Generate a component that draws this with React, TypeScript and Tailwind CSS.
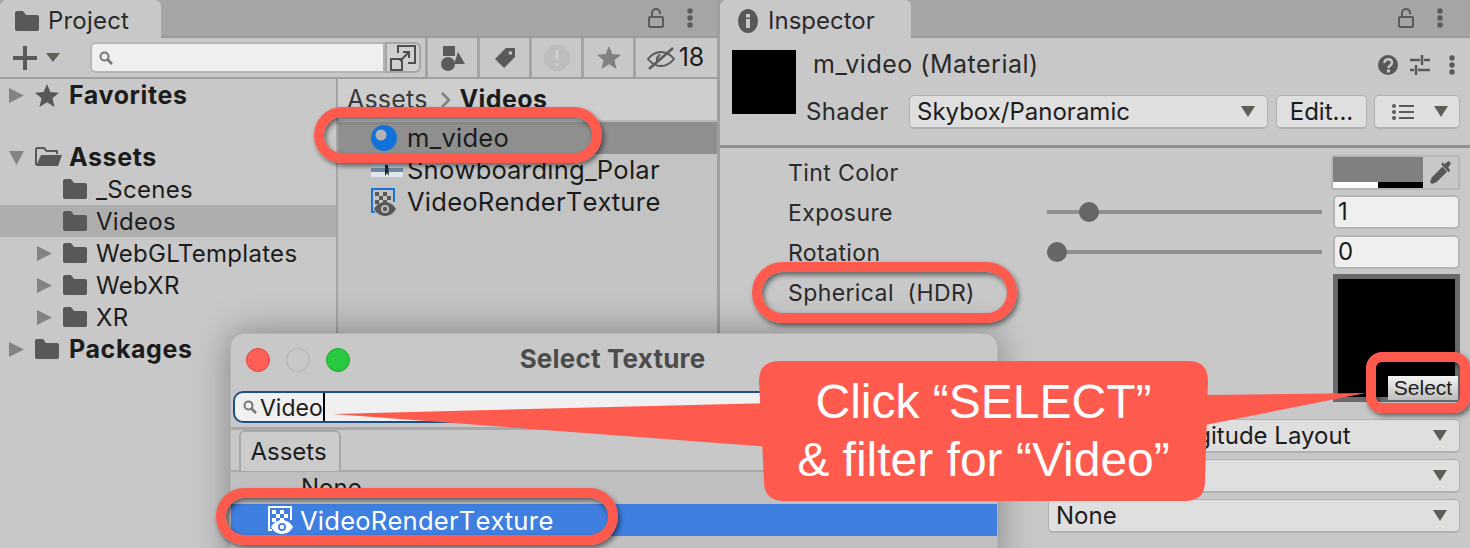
import React from "react";

const Folder = ({ className = "" }: { className?: string }) => (
  <svg viewBox="0 0 24 20" className={className} fill="#585858">
    <path d="M0 2a2 2 0 0 1 2-2h6l3 4h11a2 2 0 0 1 2 2v12a2 2 0 0 1-2 2H2a2 2 0 0 1-2-2z" />
  </svg>
);

const FolderOpen = ({ className = "" }: { className?: string }) => (
  <svg viewBox="0 0 27 20" className={className}>
    <path d="M1 18V2.5A1.5 1.5 0 0 1 2.5 1H9l2.5 3H22v3" fill="none" stroke="#585858" strokeWidth="2" />
    <path d="M1 19 6 8h21l-4 11z" fill="#585858" />
  </svg>
);

const Tri = ({ open = false, className = "" }: { open?: boolean; className?: string }) => (
  <svg viewBox="0 0 16 16" className={className} fill="#838383">
    {open ? <path d="M0 1h16L8 16z" /> : <path d="M0 0l16 8-16 8z" />}
  </svg>
);

const Star = ({ className = "", fill = "#585858" }: { className?: string; fill?: string }) => (
  <svg viewBox="0 0 24 23" className={className} fill={fill}>
    <path d="M12 0l3.400 8 8.600.7-6.500 5.600 2 8.700L12 18.300 4.500 23l2-8.700L0 8.700 8.600 8z" />
  </svg>
);

const Search = ({ className = "" }: { className?: string }) => (
  <svg viewBox="0 0 14 14" className={className} fill="none" stroke="#777" strokeWidth="2">
    <circle cx="5.500" cy="5.500" r="4" />
    <path d="M8.500 8.500 13 13" strokeWidth="2.600" />
  </svg>
);

const Lock = () => (
  <svg viewBox="0 0 16 20" className="w-[16px] h-[20px]" fill="none" stroke="#5a5a5a" strokeWidth="2">
    <rect x="1" y="9" width="14" height="10" rx="1" />
    <path d="M4 9V5a4 4 0 0 1 8 0v1" />
  </svg>
);

const Dots = ({ fill = "#5a5a5a" }: { fill?: string }) => (
  <svg viewBox="0 0 6 20" className="w-[6px] h-[20px]" fill={fill}>
    <circle cx="3" cy="3" r="2.700" />
    <circle cx="3" cy="10" r="2.700" />
    <circle cx="3" cy="17" r="2.700" />
  </svg>
);

const RenderTex = ({ light = false, className = "" }: { light?: boolean; className?: string }) => {
  const c = light ? "#ffffff" : "#585858";
  const b = light ? "#ffffff" : "#1a73d9";
  return (
    <svg viewBox="0 0 26 28" className={className}>
      <path d="M4 24H1V1h22v13" fill="none" stroke={b} strokeWidth="2" />
      <path d="M4 4h4v4H4zM12 4h4v4h-4zM8 8h4v4H8zM16 8h4v4h-4zM4 12h4v4H4zM12 12h4v3h-4z" fill={c} />
      <path d="M3 21c3-5 7-7 11-7s8 2 11 7c-3 5-7 7-11 7S6 26 3 21z" fill={c} />
      <circle cx="14" cy="21" r="4" fill={light ? "#3f7fe0" : "#c0c0c0"} />
      <circle cx="14" cy="21" r="2.200" fill={c} />
    </svg>
  );
};

const Caret = () => (
  <svg viewBox="0 0 14 11" className="w-[14px] h-[11px]" fill="#5f5f57">
    <path d="M0 0h14L7 11z" />
  </svg>
);

const TreeRow = ({
  label,
  indent,
  bold = false,
  arrow = false,
  open = false,
  selected = false,
  icon,
}: {
  label: string;
  indent: number;
  bold?: boolean;
  arrow?: boolean;
  open?: boolean;
  selected?: boolean;
  icon?: React.ReactNode;
}) => {
  const wrap = indent === 0 ? "pl-[9px]" : "pl-[37px]";
  return (
    <div className={`flex items-center h-8 ${wrap} ${selected ? "bg-[#aeaeae]" : ""}`}>
      <div className="w-[26px] flex items-center shrink-0">
        {arrow && <Tri open={open} className="w-[15px] h-[15px]" />}
      </div>
      <div className="w-[34px] flex items-center shrink-0">
        {icon ?? <Folder className="w-[24px] h-[20px]" />}
      </div>
      <span
        className={`leading-8 text-[#1c1c1c] ${
          bold ? "text-[25px] font-bold tracking-[0.6px]" : "text-[24px] tracking-[0.3px] -ml-[1px] pt-[1px]"
        }`}
      >
        {label}
      </span>
    </div>
  );
};

const FileRow = ({ icon, label, selected = false }: { icon: React.ReactNode; label: string; selected?: boolean }) => (
  <div className={`flex items-center h-8 pl-[33px] ${selected ? "bg-[#8f8f8f]" : ""}`}>
    <div className="w-[36px] flex items-center justify-start shrink-0">{icon}</div>
    <span className="text-[25.6px] tracking-[0.2px] leading-8 text-[#1c1c1c] [font-kerning:none]">{label}</span>
  </div>
);

const ToolBtn = ({ children }: { children: React.ReactNode }) => (
  <div className="w-[52px] h-full flex items-center justify-center border-l-[3px] border-[#a4a4a4] shrink-0">
    {children}
  </div>
);

const Dropdown = ({ text, className = "" }: { text?: string; className?: string }) => (
  <div
    className={`h-[34px] bg-[#dfdfdf] rounded-[5px] border-b-2 border-x border-t border-[#b0b0b0] flex items-center justify-between pl-[7px] pr-[12px] ${className}`}
  >
    <span className="text-[24px] text-[#1c1c1c] whitespace-nowrap">{text}</span>
    <Caret />
  </div>
);

const Slider = ({ pos }: { pos: number }) => (
  <div className="relative w-[275px] h-1 bg-[#8f8f8f] mr-[11px]">
    <div className="absolute top-[-8px] w-5 h-5 rounded-full bg-[#666666]" style={{ left: pos }} />
  </div>
);

const NumField = ({ value }: { value: string }) => (
  <div className="w-[127px] h-[34px] bg-[#efefef] rounded-[5px] border-2 border-[#b5b5b5] flex items-center pl-[3px] text-[24px] text-[#1c1c1c]">
    {value}
  </div>
);

const Label = ({ children }: { children: React.ReactNode }) => (
  <span className="block pt-[2px] text-[23px] tracking-[0.4px] text-[#2a2a2a]">{children}</span>
);

const Ring = ({ className }: { className: string }) => (
  <div
    className={`absolute border-[10px] border-[#ff5a4e] shadow-[2px_3px_5px_rgba(0,0,0,0.5),inset_2px_3px_5px_rgba(0,0,0,0.5)] ${className}`}
  />
);

export default function App() {
  return (
    <div className="relative w-[1470px] h-[548px] overflow-hidden bg-[#c8c8c8] font-['Inter',sans-serif] flex">
      {/* Project panel */}
      <div className="w-[717px] h-full shrink-0 flex flex-col">
        <div className="h-[38px] bg-[#a5a5a5] border-b-2 border-[#9a9a9a] flex justify-between items-start pr-[24px] shrink-0">
          <div className="w-[161px] h-[38px] bg-[#c8c8c8] rounded-t-[6px] flex items-center pl-[15px] pt-[3px] gap-[9px]">
            <Folder className="w-[24px] h-[20px]" />
            <span className="text-[24px] tracking-[0.2px] text-[#2a2a2a]">Project</span>
          </div>
          <div className="flex items-center gap-[23px] h-[36px]">
            <Lock />
            <Dots />
          </div>
        </div>
        <div className="h-[41px] border-b-2 border-[#a0a0a0] flex items-center shrink-0">
          <div className="flex items-center w-[90px] pl-[13px] gap-[9px] shrink-0">
            <svg viewBox="0 0 24 24" className="w-[24px] h-[24px]" fill="#5a5a5a">
              <path d="M10 0h4v10h10v4H14v10h-4V14H0v-4h10z" />
            </svg>
            <svg viewBox="0 0 14 9" className="w-[14px] h-[9px]" fill="#5f5f57">
              <path d="M0 0h14L7 9z" />
            </svg>
          </div>
          <div className="w-[335px] h-[31px] flex items-center shrink-0 pr-[4px]">
            <div className="flex-1 h-full bg-[#efefef] rounded-l-[6px] border-2 border-[#b5b5b5] flex items-center pl-[7px]">
              <Search className="w-[14px] h-[14px]" />
            </div>
            <div className="w-[36px] h-full bg-[#d0d0d0] rounded-r-[6px] border-2 border-[#a5a5a5] flex items-center justify-center">
              <svg viewBox="0 0 26 26" className="w-[26px] h-[26px]" fill="none" stroke="#4f4f4f" strokeWidth="2">
                <path d="M8 8V1h17v17h-7" />
                <rect x="1" y="14" width="11" height="11" />
                <path d="M10 16l9-9M13 7h6v6" />
              </svg>
            </div>
          </div>
          <ToolBtn>
            <svg viewBox="0 0 26 26" className="w-[26px] h-[26px]" fill="#5a5a5a">
              <rect x="3" y="1" width="12" height="10" />
              <path d="M18 7l7 12H14z" />
              <circle cx="8" cy="19" r="7" />
            </svg>
          </ToolBtn>
          <ToolBtn>
            <svg viewBox="0 0 22 22" className="w-[20px] h-[20px]" fill="#5a5a5a">
              <path d="M12 0h9a1 1 0 0 1 1 1v9L10 22 0 12zm5 3.500a2 2 0 1 0 0 4 2 2 0 0 0 0-4z" fillRule="evenodd" />
            </svg>
          </ToolBtn>
          <ToolBtn>
            <svg viewBox="0 0 26 26" className="w-[26px] h-[26px]">
              <path d="M8 0h10l8 8v10l-8 8H8l-8-8V8z" fill="#bdbdbd" />
              <rect x="11.500" y="5" width="3" height="10" fill="#cfcfcf" />
              <rect x="11.500" y="18" width="3" height="3" fill="#cfcfcf" />
            </svg>
          </ToolBtn>
          <ToolBtn>
            <Star className="w-[24px] h-[23px]" fill="#808080" />
          </ToolBtn>
          <div className="flex-1 h-full flex items-center justify-center pr-[2px] gap-[4px] border-l-[3px] border-[#a4a4a4]">
            <svg viewBox="0 0 28 24" className="w-[28px] h-[24px]" fill="none" stroke="#5a5a5a" strokeWidth="2">
              <path d="M1 13c4-5 8-7 13-7s9 2 13 7c-4 5-8 7-13 7S5 18 1 13z" />
              <path d="M2 23 26 2" strokeWidth="2.500" />
              <path d="M9 13a5 5 0 0 1 5-5l-5 9z" fill="#5a5a5a" stroke="none" />
            </svg>
            <span className="text-[25px] text-[#1c1c1c]">18</span>
          </div>
        </div>
        <div className="flex-1 flex min-h-0">
          <div className="w-[338px] shrink-0 border-r-2 border-[#a5a5a5]">
            <TreeRow label="Favorites" indent={0} bold arrow icon={<Star className="w-[24px] h-[23px]" />} />
            <div className="h-[30px]" />
            <TreeRow label="Assets" indent={0} bold arrow open icon={<FolderOpen className="w-[27px] h-[20px]" />} />
            <TreeRow label="_Scenes" indent={1} />
            <TreeRow label="Videos" indent={1} selected />
            <TreeRow label="WebGLTemplates" indent={1} arrow />
            <TreeRow label="WebXR" indent={1} arrow />
            <TreeRow label="XR" indent={1} arrow />
            <TreeRow label="Packages" indent={0} bold arrow />
          </div>
          <div className="flex-1 bg-[#c3c3c3]">
            <div className="h-[43px] bg-[#cecece] border-b-2 border-[#b8b8b8] flex items-center pl-[9px] text-[25px] text-[#3a3a3a]">
              <span className="tracking-[0.2px]">Assets</span>
              <svg viewBox="0 0 10 16" className="w-[10px] h-[16px] ml-[13px] mr-[9px]" fill="none" stroke="#808080" strokeWidth="2.500">
                <path d="M1 1l7 7-7 7" />
              </svg>
              <span className="font-bold tracking-[0.4px] text-[#1c1c1c]">Videos</span>
            </div>
            <FileRow
              selected
              label="m_video"
              icon={
                <svg viewBox="0 0 26 26" className="w-[26px] h-[26px]">
                  <circle cx="13" cy="13" r="13" fill="#1172d9" />
                  <circle cx="10" cy="10" r="5.500" fill="#b3b3b3" />
                </svg>
              }
            />
            <FileRow
              label="Snowboarding_Polar"
              icon={
                <svg viewBox="0 0 32 14" className="w-[32px] h-[14px]">
                  <rect width="32" height="14" fill="#b8c8d6" />
                  <rect y="5" width="32" height="4" fill="#6f8aa3" />
                  <rect y="9" width="32" height="5" fill="#dfe6ee" />
                  <path d="M14 2l3 0 1 11-2-3-2 3z" fill="#1e2530" />
                </svg>
              }
            />
            <FileRow label="VideoRenderTexture" icon={<RenderTex className="w-[26px] h-[28px]" />} />
          </div>
        </div>
      </div>

      <div className="w-[3px] h-full bg-[#9f9f9f] shrink-0" />

      {/* Inspector panel */}
      <div className="flex-1 h-full flex flex-col min-w-0">
        <div className="h-[38px] bg-[#a5a5a5] border-b-2 border-[#9a9a9a] flex justify-between items-start pr-[27px] shrink-0">
          <div className="w-[191px] h-[38px] bg-[#c8c8c8] rounded-t-[6px] flex items-center pl-[18px] pt-[3px] gap-[10px]">
            <svg viewBox="0 0 20 24" className="w-[20px] h-[24px]">
              <ellipse cx="10" cy="12" rx="10" ry="12" fill="#585858" />
              <rect x="8" y="10" width="4" height="9" fill="#c8c8c8" />
              <rect x="8" y="5" width="4" height="3.500" fill="#c8c8c8" />
            </svg>
            <span className="text-[24px] text-[#2a2a2a]">Inspector</span>
          </div>
          <div className="flex items-center gap-[23px] h-[36px]">
            <Lock />
            <Dots />
          </div>
        </div>
        <div className="h-[110px] border-b-[3px] border-[#8f8f8f] flex pl-[12px] pr-[10px] pt-[12px] shrink-0">
          <div className="w-[64px] h-[64px] bg-black shrink-0" />
          <div className="flex-1 flex flex-col">
            <div className="h-[29px] flex items-center justify-between pl-[17px] pr-[5px]">
              <span className="text-[25px] tracking-[0.5px] text-[#2a2a2a]">m_video (Material)</span>
              <div className="flex items-center gap-[12px]">
                <svg viewBox="0 0 20 20" className="w-[20px] h-[20px]">
                  <circle cx="10" cy="10" r="10" fill="#585858" />
                  <path d="M6.500 8c0-5 7.500-5 7.500-.5 0 3-3.500 3-3.500 5.500" fill="none" stroke="#c8c8c8" strokeWidth="2.500" />
                  <rect x="9" y="14.500" width="3" height="3" fill="#c8c8c8" />
                </svg>
                <svg viewBox="0 0 20 20" className="w-[20px] h-[20px]" fill="none" stroke="#585858" strokeWidth="2.500">
                  <path d="M0 5h10M14 5h6M12 0v10M0 15h4M8 15h12M6 10v10" />
                </svg>
                <div className="ml-[7px]">
                  <Dots />
                </div>
              </div>
            </div>
            <div className="flex items-center mt-[16px] h-[34px]">
              <div className="w-[113px] pl-[10px] shrink-0">
                <span className="text-[24px] tracking-[0.3px] text-[#2a2a2a]">Shader</span>
              </div>
              <Dropdown text="Skybox/Panoramic" className="w-[359px] shrink-0" />
              <div className="w-[91px] h-[34px] ml-[8px] bg-[#dfdfdf] rounded-[5px] border-b-2 border-x border-t border-[#b0b0b0] flex items-center justify-center text-[24px] text-[#1c1c1c] shrink-0">
                Edit...
              </div>
              <div className="w-[86px] h-[34px] ml-[7px] bg-[#dfdfdf] rounded-[5px] border-b-2 border-x border-t border-[#b0b0b0] flex items-center justify-between pl-[17px] pr-[11px] shrink-0">
                <svg viewBox="0 0 22 16" className="w-[22px] h-[16px]" stroke="#5a5a5a" strokeWidth="2" fill="#5a5a5a">
                  <path d="M7 2h15M7 8h15M7 14h15" />
                  <circle cx="2" cy="2" r="1" />
                  <circle cx="2" cy="8" r="1" />
                  <circle cx="2" cy="14" r="1" />
                </svg>
                <Caret />
              </div>
            </div>
          </div>
        </div>
        <div className="flex-1 pl-[68px] pr-[10px] pt-[4px] flex flex-col">
          <div className="h-[40px] flex items-center justify-between">
            <Label>Tint Color</Label>
            <div className="w-[129px] h-[35px] border-2 border-[#b5b5b5] rounded-[3px] flex">
              <div className="w-[90px] flex flex-col shrink-0">
                <div className="flex-1 bg-[#808080]" />
                <div className="h-[6px] flex">
                  <div className="flex-1 bg-white" />
                  <div className="flex-1 bg-black" />
                </div>
              </div>
              <div className="flex-1 flex items-center justify-center">
                <svg viewBox="0 0 22 24" className="w-[21px] h-[23px]" fill="#585858">
                  <path d="M13 6l5 5-11 11-5 2-2-2 2-5z" />
                  <path d="M12 4l8 8 1-3-2-2 2-3a2 2 0 0 0-3-3l-3 2-2-2z" />
                </svg>
              </div>
            </div>
          </div>
          <div className="h-[40px] flex items-center justify-between">
            <Label>Exposure</Label>
            <div className="flex items-center">
              <Slider pos={32} />
              <NumField value="1" />
            </div>
          </div>
          <div className="h-[40px] flex items-center justify-between">
            <Label>Rotation</Label>
            <div className="flex items-center">
              <Slider pos={0} />
              <NumField value="0" />
            </div>
          </div>
          <div className="h-[134px] flex items-start justify-between">
            <div className="h-[40px] flex items-center">
              <Label>Spherical&nbsp; (HDR)</Label>
            </div>
            <div className="relative w-[127px] h-[128px] mt-[2px] bg-black border-[5px] border-[#6a6a6a]">
              <div className="absolute right-[-3px] bottom-[-3px] w-[70px] h-[24px] bg-gradient-to-b from-[#f4f4f4] to-[#bdbdbd] flex items-center justify-center text-[21px] text-[#1c1c1c] font-['Liberation_Sans',sans-serif]">
                Select
              </div>
            </div>
          </div>
          <div className="flex flex-col gap-[6px] mt-[13px] self-end w-[412px]">
            <Dropdown text="Latitude Longitude Layout" />
            <Dropdown />
            <Dropdown text="None" />
          </div>
        </div>
      </div>

      {/* Floating Select Texture window */}
      <div className="absolute left-[230px] top-[333px] w-[768px] h-[240px] bg-[#c8c8c8] rounded-t-[14px] border border-[#b4b4b4] shadow-[0_0_36px_rgba(0,0,0,0.35)] flex flex-col">
        <div className="h-[52px] relative flex items-center justify-center shrink-0 pb-[4px]">
          <div className="absolute left-[15px] top-[14px] flex gap-[16px]">
            <div className="w-6 h-6 rounded-full bg-[#ff5f57] border border-[#e0443e]" />
            <div className="w-6 h-6 rounded-full bg-[#c8c8c8] border border-[#b0b0b0]" />
            <div className="w-6 h-6 rounded-full bg-[#28c840] border border-[#1aab29]" />
          </div>
          <span className="text-[26px] tracking-[0.2px] font-bold text-[#4c4c4c] pr-[3px]">Select Texture</span>
        </div>
        <div className="pl-[2px] h-[44px] border-b-[3px] border-[#a8a8a8] pt-[5px] shrink-0">
          <div className="h-[32px] bg-[#f0f0f0] rounded-l-[10px] border-2 border-r-0 border-[#1c4e8a] flex items-center pl-[8px]">
            <Search className="w-[14px] h-[14px]" />
            <span className="text-[23px] text-[#1c1c1c] ml-[3px] pt-[2px]">Video</span>
            <div className="w-[2px] h-[28px] bg-black" />
          </div>
        </div>
        <div className="h-[42px] border-b-2 border-[#a8a8a8] pl-[8px] shrink-0">
          <div className="w-[102px] h-[41px] bg-[#cbcbcb] rounded-t-[6px] border-x-2 border-t-2 border-[#a8a8a8] flex items-center justify-center pr-[3px] text-[24px] text-[#1c1c1c]">
            Assets
          </div>
        </div>
        <div className="flex-1 bg-[#bfbfbf] flex flex-col">
          <div className="h-[32px] flex items-center pl-[70px] text-[24px] text-[#1c1c1c]">None</div>
          <div className="h-[32px] bg-[#3f7fe0] flex items-center pl-[37px] gap-[6px] text-white">
            <RenderTex light className="w-[26px] h-[28px]" />
            <span className="text-[25.6px] tracking-[0.2px] pt-[3px] [font-kerning:none]">VideoRenderTexture</span>
          </div>
        </div>
      </div>

      {/* Annotations */}
      <Ring className="left-[314px] top-[107px] w-[288px] h-[56px] rounded-full" />
      <Ring className="left-[752px] top-[262px] w-[265px] h-[61px] rounded-full" />
      <Ring className="left-[1366px] top-[352px] w-[104px] h-[61px] rounded-[16px]" />
      <Ring className="left-[216px] top-[488px] w-[402px] h-[57px] rounded-full" />

      <svg viewBox="0 0 1470 548" className="absolute inset-0 w-[1470px] h-[548px] pointer-events-none" fill="#ff5a4e">
        <path d="M333 414 770 403V447L770 447z" />
        <path d="M1200 395 1366 393 1200 426z" />
        <path d="M779 361H1188Q1208 361 1208 381L1205 481Q1205 501 1185 501H784Q764 501 764 481L759 381Q759 361 779 361z" />
      </svg>
      <div className="absolute left-[759px] top-[373px] w-[449px] text-center text-white text-[48px] leading-[58px] font-['Liberation_Sans',sans-serif]">
        <div>Click “SELECT”</div>
        <div>&amp; filter for “Video”</div>
      </div>
    </div>
  );
}
